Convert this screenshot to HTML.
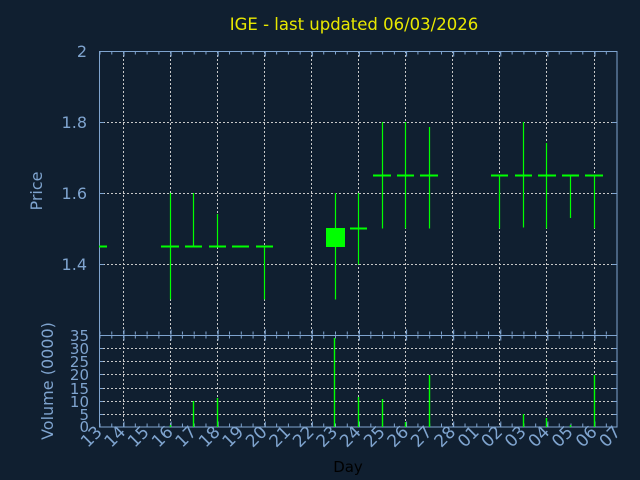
<!DOCTYPE html>
<html><head><meta charset="utf-8"><style>
html,body{margin:0;padding:0;background:#101f30;}
svg{display:block}
text{font-family:"DejaVu Sans","Liberation Sans",sans-serif}
</style></head><body>
<svg width="640" height="480" viewBox="0 0 640 480" xmlns="http://www.w3.org/2000/svg">
<rect width="640" height="480" fill="#101f30"/>
<text x="354" y="30" text-anchor="middle" font-size="16.5" fill="#e8e800">IGE - last updated 06/03/2026</text>

<g stroke="#c8c8c8" stroke-width="1" stroke-dasharray="2 2" fill="none">
<path d="M123.5 51V427M170.5 51V427M217.5 51V427M264.5 51V427M311.5 51V427M358.5 51V427M405.5 51V427M452.5 51V427M499.5 51V427M546.5 51V427M594.5 51V427"/>
<path d="M99 122.5H617M99 193.5H617M99 264.5H617"/>
<path d="M99 348.5H617M99 361.5H617M99 374.5H617M99 388.5H617M99 401.5H617M99 414.5H617"/>
</g>

<g stroke="#7fa4cf" fill="none">
<rect x="99.5" y="51.5" width="517.5" height="375.5" stroke-width="1"/>
<line x1="99" y1="335.5" x2="617" y2="335.5"/>
<line x1="99.5" y1="53" x2="617" y2="53" stroke-width="3" stroke-dasharray="1 10.775"/>
<line x1="99.5" y1="333" x2="617" y2="333" stroke-width="3" stroke-dasharray="1 10.775"/>
<line x1="99.5" y1="337" x2="617" y2="337" stroke-width="3" stroke-dasharray="1 10.775"/>
<line x1="99.5" y1="425" x2="617" y2="425" stroke-width="3" stroke-dasharray="1 10.775"/>
<line x1="123.5" y1="54" x2="617" y2="54" stroke-width="5" stroke-dasharray="1 46.1"/>
<line x1="123.5" y1="332" x2="617" y2="332" stroke-width="5" stroke-dasharray="1 46.1"/>
<line x1="123.5" y1="338" x2="617" y2="338" stroke-width="5" stroke-dasharray="1 46.1"/>
<line x1="123.5" y1="424" x2="617" y2="424" stroke-width="5" stroke-dasharray="1 46.1"/>
<path d="M99 122.5h5M99 193.5h5M99 264.5h5M612 122.5h5M612 193.5h5M612 264.5h5"/>
<path d="M99 348.5h4M99 361.5h4M99 374.5h4M99 388.5h4M99 401.5h4M99 414.5h4M613 348.5h4M613 361.5h4M613 374.5h4M613 388.5h4M613 401.5h4M613 414.5h4"/>
</g>

<g stroke="#00ff00" stroke-width="1.2" fill="none">
<path d="M170.5 193V299.5M193.5 193V246.5M217.5 214V246.5M264.5 246.5V299.5"/>
<path d="M335.5 193V299.5M358.5 193V264.5M382.5 122V228.5M405.5 122V228.5M429.5 127V228.5M499.5 175.5V228.5M523.5 122V227.5M546.5 143V228.5M570.5 175.5V218M594.5 175.5V228.5"/>
</g>
<g fill="#00ff00">
<rect x="99" y="245.5" width="8" height="2"/>
<rect x="161" y="245.5" width="18" height="2"/>
<rect x="185" y="245.5" width="17" height="2"/>
<rect x="209" y="245.5" width="17" height="2"/>
<rect x="232" y="245.5" width="17" height="2"/>
<rect x="256" y="245.5" width="17" height="2"/>
<rect x="326" y="228" width="19" height="19"/>
<rect x="350" y="227.5" width="17" height="2"/>
<rect x="373" y="174.5" width="18" height="2"/>
<rect x="397" y="174.5" width="17" height="2"/>
<rect x="420" y="174.5" width="18" height="2"/>
<rect x="491" y="174.5" width="17" height="2"/>
<rect x="515" y="174.5" width="17" height="2"/>
<rect x="538" y="174.5" width="18" height="2"/>
<rect x="562" y="174.5" width="17" height="2"/>
<rect x="585" y="174.5" width="18" height="2"/>
</g>

<g stroke="#00ff00" stroke-width="1.4">
<path d="M170.5 425V427M193.5 401V427M217.5 398V427M334.5 338V427M358.5 397V427M382.5 399V427M405.5 422V427M429.5 375V427M523.5 414V427M546.5 418V427M570.5 425V427M594.5 375V427"/>
</g>

<g fill="#7fa4cf" font-size="16" text-anchor="end">
<text x="87" y="57">2</text>
<text x="87" y="128">1.8</text>
<text x="87" y="199">1.6</text>
<text x="87" y="270">1.4</text>
</g>
<g fill="#7fa4cf" font-size="15" text-anchor="end">
<text x="89" y="341">35</text>
<text x="89" y="354">30</text>
<text x="89" y="367">25</text>
<text x="89" y="380">20</text>
<text x="89" y="394">15</text>
<text x="89" y="407">10</text>
<text x="89" y="420">5</text>
<text x="89" y="432">0</text>
</g>
<text transform="translate(42 191) rotate(-90)" text-anchor="middle" font-size="16" fill="#7fa4cf">Price</text>
<text transform="translate(53 381) rotate(-90)" text-anchor="middle" font-size="16" fill="#7fa4cf">Volume (0000)</text>

<g fill="#7fa4cf" font-size="17" text-anchor="end">
<text transform="translate(103 433) rotate(-45)">13</text>
<text transform="translate(126.5 433) rotate(-45)">14</text>
<text transform="translate(150 433) rotate(-45)">15</text>
<text transform="translate(174 433) rotate(-45)">16</text>
<text transform="translate(197.5 433) rotate(-45)">17</text>
<text transform="translate(221 433) rotate(-45)">18</text>
<text transform="translate(244.5 433) rotate(-45)">19</text>
<text transform="translate(268 433) rotate(-45)">20</text>
<text transform="translate(291.5 433) rotate(-45)">21</text>
<text transform="translate(315 433) rotate(-45)">22</text>
<text transform="translate(338.5 433) rotate(-45)">23</text>
<text transform="translate(362 433) rotate(-45)">24</text>
<text transform="translate(386 433) rotate(-45)">25</text>
<text transform="translate(409.5 433) rotate(-45)">26</text>
<text transform="translate(433 433) rotate(-45)">27</text>
<text transform="translate(456.5 433) rotate(-45)">28</text>
<text transform="translate(480 433) rotate(-45)">01</text>
<text transform="translate(503.5 433) rotate(-45)">02</text>
<text transform="translate(527 433) rotate(-45)">03</text>
<text transform="translate(550.5 433) rotate(-45)">04</text>
<text transform="translate(574 433) rotate(-45)">05</text>
<text transform="translate(598 433) rotate(-45)">06</text>
<text transform="translate(621.5 433) rotate(-45)">07</text>
</g>
<text x="348" y="472" text-anchor="middle" font-size="15" fill="#000">Day</text>
</svg>
</body></html>
